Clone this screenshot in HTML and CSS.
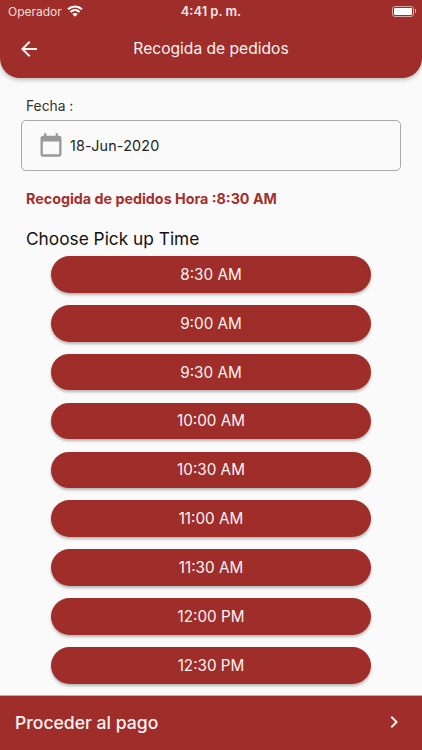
FILE: index.html
```html
<!DOCTYPE html>
<html lang="es">
<head>
<meta charset="utf-8">
<title>Recogida de pedidos</title>
<link rel="stylesheet" href="styles.css">
</head>
<body>
<div class="app">
  <header class="appbar">
    <div class="status">
      <div class="status-left">
        <span>Operador</span>
        <svg class="wifi" viewBox="0 0 16 12" width="16" height="12"><path fill="none" stroke="currentColor" stroke-width="2.100" d="M1 4.300C5 .5 11 .5 15 4.300M3.500 6.900c2.600-2.400 6.400-2.400 9 0"/><path fill="currentColor" d="M8 11.700 5.300 8.900c1.600-1.300 3.800-1.300 5.400 0z"/></svg>
      </div>
      <span class="clock">4:41 p. m.</span>
      <div class="battery-wrap">
        <div class="battery"><span class="battery-fill"></span></div>
        <span class="battery-nub"></span>
      </div>
    </div>
    <div class="toolbar">
      <svg class="back" viewBox="0 0 24 24" width="24" height="24"><path fill="currentColor" d="M20 11H7.830l5.590-5.590L12 4l-8 8 8 8 1.410-1.410L7.830 13H20v-2z"/></svg>
      <h1 class="title">Recogida de pedidos</h1>
    </div>
  </header>
  <main class="content">
    <div class="field-label">Fecha :</div>
    <div class="date-field">
      <svg class="cal" viewBox="0 0 24 24" width="28" height="28"><path fill="currentColor" d="M19 4h-1V2h-2v2H8V2H6v2H5c-1.100 0-2 .9-2 2v14c0 1.100.9 2 2 2h14c1.100 0 2-.9 2-2V6c0-1.100-.9-2-2-2zm0 16H5V9h14v11z"/></svg>
      <span>18-Jun-2020</span>
    </div>
    <div class="selected">Recogida de pedidos Hora :8:30 AM</div>
    <div class="choose">Choose Pick up Time</div>
    <div class="times">
      <button class="time">8:30 AM</button>
      <button class="time">9:00 AM</button>
      <button class="time">9:30 AM</button>
      <button class="time">10:00 AM</button>
      <button class="time">10:30 AM</button>
      <button class="time">11:00 AM</button>
      <button class="time">11:30 AM</button>
      <button class="time">12:00 PM</button>
      <button class="time">12:30 PM</button>
    </div>
  </main>
  <footer class="proceed">
    <span>Proceder al pago</span>
    <svg viewBox="0 0 24 24" width="24" height="24"><path fill="currentColor" d="M10 6 8.590 7.410 13.170 12l-4.580 4.590L10 18l6-6z"/></svg>
  </footer>
</div>
</body>
</html>
```
FILE: styles.css
```css
* { box-sizing: border-box; }
html, body { margin: 0; padding: 0; }
body { font-family: Inter, "Liberation Sans", sans-serif; background: #fafafa; }
.app { width: 422px; height: 750px; display: flex; flex-direction: column; overflow: hidden; background: #fafafa; }
.appbar { height: 78px; flex: none; background: #9f2d29; color: #fff; border-radius: 0 0 20px 20px; box-shadow: 0 2px 4px rgba(0,0,0,.25); }
.status { height: 22px; display: flex; align-items: center; justify-content: space-between; padding: 0 6px 0 8px; position: relative; font-size: 12px; color: #f3dfde; }
.status-left { display: flex; align-items: center; gap: 5px; }
.wifi { color: #fff; margin-top: -1px; }
.clock { position: absolute; left: 0; right: 0; text-align: center; font-weight: 600; font-size: 12.900px; color: #f6e6e5; }
.battery-wrap { display: flex; align-items: center; gap: 1px; position: relative; }
.battery { width: 22px; height: 11px; border: 1px solid #d9a9a7; border-radius: 3px; padding: 1px; }
.battery-fill { display: block; height: 100%; background: #fff; border-radius: 1px; }
.battery-nub { width: 1px; height: 4px; background: #d9a9a7; }
.toolbar { height: 56px; display: flex; align-items: center; position: relative; padding: 0 0 0 17px; color: #fbf3f2; margin-top: -1px; }
.title { position: absolute; left: 0; right: 0; top: 18px; margin: 0; text-align: center; font-size: 15.600px; font-weight: 400; line-height: 20px; }
.content { flex: 1; padding: 18px 21px 0; min-height: 0; }
.field-label { font-size: 13.800px; line-height: 20px; color: #333; padding-left: 5px; }
.date-field { margin-top: 4px; height: 50.500px; border: 1px solid #aaa; border-radius: 5px; display: flex; align-items: center; gap: 5.500px; padding: 0 0 0 14.500px; font-size: 14.300px; letter-spacing: .2px; color: #222; }
.cal { color: #999; }
.selected { margin-top: 18.500px; padding-left: 5px; font-size: 14.300px; line-height: 20px; font-weight: 700; color: #a3302c; }
.choose { margin-top: 19px; padding-left: 5px; font-size: 17.300px; line-height: 22px; color: #111; }
.times { margin-top: 6px; display: flex; flex-direction: column; align-items: center; gap: 12.200px; }
.time { width: 320px; height: 36.700px; border: 0; border-radius: 19px; background: #9f2d29; color: #fbf3f2; font: 400 15.250px Inter, "Liberation Sans", sans-serif; box-shadow: 0 2px 3px rgba(0,0,0,.28); padding: 0; }
.proceed { height: 55.500px; flex: none; background: #9f2d29; color: #fbf3f2; border-top: 1px solid #d9a9a7; display: flex; align-items: center; justify-content: space-between; padding: 0 16px 1px 15px; font-size: 17.600px; font-weight: 500; }
```
